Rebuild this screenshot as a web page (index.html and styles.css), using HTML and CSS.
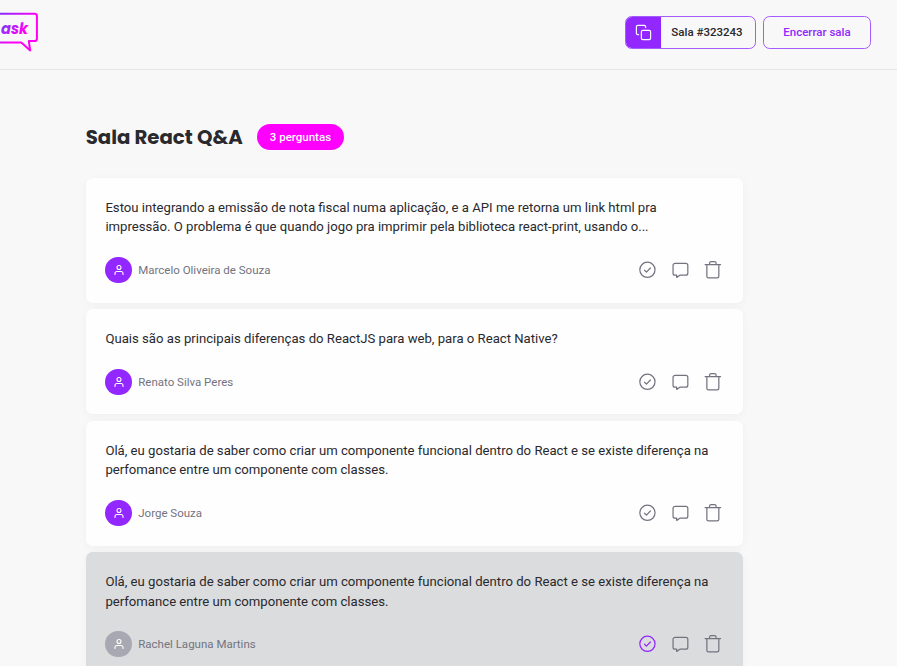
FILE: index.html
```html
<!DOCTYPE html>
<html lang="pt-BR">
<head>
<meta charset="utf-8">
<title>Sala React Q&amp;A</title>
<link rel="stylesheet" href="styles.css">
</head>
<body>
<svg class="sprite" aria-hidden="true">
  <symbol id="user" viewBox="0 0 24 24"><circle cx="12" cy="7" r="4"/><path d="M20 21v-2a4 4 0 0 0-4-4H8a4 4 0 0 0-4 4v2"/></symbol>
  <symbol id="check" viewBox="0 0 24 24"><circle cx="11.500" cy="12" r="9.300"/><path d="M8 12.500l2.300 2.300 4.800-5"/></symbol>
  <symbol id="chat" viewBox="0 0 24 24"><path d="M5.600 18.500H5a2.500 2.500 0 0 1-2.500-2.500V6.500A2.500 2.500 0 0 1 5 4h13a2.500 2.500 0 0 1 2.500 2.500V16a2.500 2.500 0 0 1-2.500 2.500h-7.200l-3.800 2.700v-2.700z"/></symbol>
  <symbol id="trash" viewBox="0 0 24 24"><path d="M2.600 5.600h18.800M19.300 5.600v14.300a2 2 0 0 1-2 2H6.700a2 2 0 0 1-2-2V5.600M8 5.600V4a2 2 0 0 1 2-2h4a2 2 0 0 1 2 2v1.600"/></symbol>
</svg>
<header class="header">
  <svg class="logo" viewBox="0 0 40 44">
    <defs>
      <linearGradient id="edge" gradientUnits="userSpaceOnUse" x1="-3" y1="0" x2="22" y2="21"><stop offset="0" stop-color="#7034ff"/><stop offset="1" stop-color="#ff00f5"/></linearGradient>
      <linearGradient id="word" gradientUnits="userSpaceOnUse" x1="2" y1="12" x2="17" y2="27"><stop offset="0" stop-color="#6540ff"/><stop offset="1" stop-color="#ff00f5"/></linearGradient>
    </defs>
    <path d="M-5 3.800H34.500a2.400 2.400 0 0 1 2.400 2.400V28.700a2.400 2.400 0 0 1-2.400 2.400H28.800L30.200 40.500L21.300 32.600H-5" fill="none" stroke="url(#edge)" stroke-width="2" stroke-linejoin="round"/>
    <text class="logo-text" x="1" y="23.500" textLength="27" lengthAdjust="spacingAndGlyphs" fill="url(#word)">ask</text>
  </svg>
  <div class="actions">
    <button class="code"><span class="copy"><svg viewBox="0 0 24 24"><rect x="9" y="9" width="13" height="13" rx="2"/><path d="M5 15H4a2 2 0 0 1-2-2V4a2 2 0 0 1 2-2h9a2 2 0 0 1 2 2v1"/></svg></span><span class="code-text">Sala #323243</span></button>
    <button class="close">Encerrar sala</button>
  </div>
</header>
<main class="room">
  <div class="heading"><h1>Sala React Q&amp;A</h1><span class="badge">3 perguntas</span></div>
  <div class="list">
    <article class="card">
      <p>Estou integrando a emissão de nota fiscal numa aplicação, e a API me retorna um link html pra<br>impressão. O problema é que quando jogo pra imprimir pela biblioteca react-print, usando o...</p>
      <footer><span class="avatar"><svg><use href="#user"/></svg></span><span class="name">Marcelo Oliveira de Souza</span><div class="tools"><svg><use href="#check"/></svg><svg><use href="#chat"/></svg><svg><use href="#trash"/></svg></div></footer>
    </article>
    <article class="card">
      <p>Quais são as principais diferenças do ReactJS para web, para o React Native?</p>
      <footer><span class="avatar"><svg><use href="#user"/></svg></span><span class="name">Renato Silva Peres</span><div class="tools"><svg><use href="#check"/></svg><svg><use href="#chat"/></svg><svg><use href="#trash"/></svg></div></footer>
    </article>
    <article class="card">
      <p>Olá, eu gostaria de saber como criar um componente funcional dentro do React e se existe diferença na<br>perfomance entre um componente com classes.</p>
      <footer><span class="avatar"><svg><use href="#user"/></svg></span><span class="name">Jorge Souza</span><div class="tools"><svg><use href="#check"/></svg><svg><use href="#chat"/></svg><svg><use href="#trash"/></svg></div></footer>
    </article>
    <article class="card answered">
      <p>Olá, eu gostaria de saber como criar um componente funcional dentro do React e se existe diferença na<br>perfomance entre um componente com classes.</p>
      <footer><span class="avatar"><svg><use href="#user"/></svg></span><span class="name">Rachel Laguna Martins</span><div class="tools"><svg class="done"><use href="#check"/></svg><svg><use href="#chat"/></svg><svg><use href="#trash"/></svg></div></footer>
    </article>
  </div>
</main>
</body>
</html>
```

FILE: styles.css
```css
* { box-sizing: border-box; margin: 0; padding: 0; }
html, body { height: 100%; overflow: hidden; }
body { background: #f8f8f8; color: #29292e; font-family: Roboto, sans-serif; }
svg { display: block; fill: none; stroke: currentColor; stroke-linecap: round; stroke-linejoin: round; }
.sprite { display: none; }
.header { display: flex; justify-content: space-between; height: 70px; padding: 0 26px 0 0; border-bottom: 1px solid #e4e5e6; }
.logo { width: 40px; height: 44px; margin-top: 10px; stroke: none; }
.logo-text { font: italic 700 16.500px Poppins, "Open Sans", sans-serif; stroke: none; }
.actions { display: flex; gap: 7px; padding-top: 16px; }
button { height: 33px; border: 1px solid #a45cff; border-radius: 6.600px; background: transparent; font: 500 11.500px Roboto, sans-serif; }
.code { display: flex; width: 131px; overflow: hidden; color: #29292e; }
.copy { display: grid; place-items: center; width: 35px; height: 31px; background: #9327ff; color: #fff; }
.copy svg { width: 17px; height: 17px; stroke-width: 1.700; }
.code-text { flex: 1; padding-right: 2px; line-height: 31px; text-align: center; }
.close { width: 108px; padding-bottom: 1px; color: #9327ff; }
.room { width: 657px; margin-left: 85.700px; padding-top: 53px; }
.heading { display: flex; align-items: center; height: 28px; }
h1 { width: 157px; font: 700 19.700px/28px Poppins, Inter, sans-serif; white-space: nowrap; }
.badge { width: 87.500px; height: 26px; margin-left: 14px; border-radius: 13px; background: #ff00ff; color: #fff; font-size: 11.500px; font-weight: 500; line-height: 26px; text-align: center; }
.list { display: flex; flex-direction: column; gap: 6.570px; margin-top: 27.100px; }
.card { flex: none; padding: 19.700px; border-radius: 6.570px; background: #fefefe; box-shadow: 0 2px 10px rgba(0, 0, 0, .04); }
.card p { font-size: 13.150px; line-height: 19.700px; white-space: nowrap; }
.card footer { display: flex; align-items: center; height: 26.300px; margin-top: 19.700px; }
.avatar { display: grid; place-items: center; width: 26.300px; height: 26.300px; border-radius: 50%; background: #9327ff; color: #fff; }
.avatar svg { width: 12px; height: 12px; stroke-width: 2.200; }
.name { margin-left: 6.570px; color: #737380; font-size: 11.500px; }
.tools { display: flex; gap: 13.140px; margin-left: auto; color: #737380; }
.tools svg { width: 19.700px; height: 19.700px; stroke-width: 1.500; }
.tools .done { color: #9327ff; }
.answered { background: #dbdcdd; }
.answered .avatar { background: #a8a8b3; }
```
